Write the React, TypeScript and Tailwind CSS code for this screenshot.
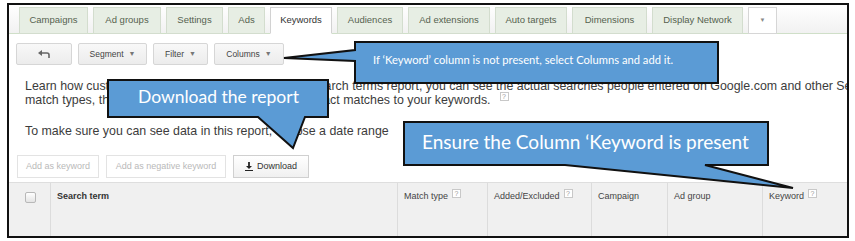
import React from "react";

const tabs = [
  { label: "Campaigns", w: "w-[69px]" },
  { label: "Ad groups", w: "w-[68px]" },
  { label: "Settings", w: "w-[57px]" },
  { label: "Ads", w: "w-[37px]" },
  { label: "Keywords", w: "w-[62px]", active: true },
  { label: "Audiences", w: "w-[66px]" },
  { label: "Ad extensions", w: "w-[82px]" },
  { label: "Auto targets", w: "w-[72px]" },
  { label: "Dimensions", w: "w-[75px]" },
  { label: "Display Network", w: "w-[91px]" },
];

function Help({ gap = "ml-[4px]" }: { gap?: string }) {
  return (
    <span
      className={`inline-flex items-center justify-center w-[9px] h-[9px] border border-[#c8c8c8] bg-white text-[7px] leading-none text-[#9a9a9a] align-top mt-[-1px] ${gap}`}
    >
      ?
    </span>
  );
}

function Caret() {
  return <span className="ml-[5px] text-[7px] text-[#777]">▼</span>;
}

function ToolButton({ w, children }: { w: string; children: React.ReactNode }) {
  return (
    <div
      className={`${w} h-[22px] flex items-center justify-center border border-[#d6d6d6] rounded-[2px] bg-gradient-to-b from-[#f8f8f8] to-[#ececec] text-[8.5px] text-[#444]`}
    >
      {children}
    </div>
  );
}

function TabBar() {
  return (
    <div className="h-[29px] flex items-end gap-[5px] pl-[10px] bg-gradient-to-b from-white to-[#f1f1f1] border-b border-[#cfdfc8]">
      {tabs.map((t) => (
        <div
          key={t.label}
          className={`${t.w} h-[27px] mb-[-1px] flex items-center justify-center text-[9.5px] border ${
            t.active
              ? "bg-white border-[#d2d2d2] border-b-white text-[#333]"
              : "bg-[#e7eee4] border-[#d3ddce] text-[#56624f]"
          }`}
        >
          {t.label}
        </div>
      ))}
      <div className="w-[29px] h-[27px] mb-[-1px] flex items-center justify-center bg-white border border-[#d6d6d6] text-[6px] text-[#888]">
        ▼
      </div>
    </div>
  );
}

function Toolbar() {
  return (
    <div className="flex gap-[6px] pl-[7px] mt-[9px]">
      <ToolButton w="w-[56px]">
        <svg width="12" height="8" viewBox="0 0 12 8">
          <path d="M4 0 L0 3 L4 6 Z" fill="#666" />
          <path d="M3 3 H9 Q11 3 11 5 V8" stroke="#666" strokeWidth="1.6" fill="none" />
        </svg>
      </ToolButton>
      <ToolButton w="w-[69px]">
        Segment
        <Caret />
      </ToolButton>
      <ToolButton w="w-[55px]">
        Filter
        <Caret />
      </ToolButton>
      <ToolButton w="w-[70px]">
        Columns
        <Caret />
      </ToolButton>
    </div>
  );
}

function Intro() {
  return (
    <div className="pl-[16px] mt-[14px] text-[12.4px] leading-[14px] text-[#3c3c3c] whitespace-nowrap overflow-hidden">
      <p>
        Learn how customers are finding your ads. With the search terms report, you can see the actual searches
        people entered on Google.com and other Search Network sites
      </p>
      <p>
        match types, this list might include terms other than exact matches to your keywords.
        <Help gap="ml-[9px]" />
      </p>
      <p className="mt-[17px]">To make sure you can see data in this report, choose a date range</p>
    </div>
  );
}

function ActionRow() {
  return (
    <div className="flex gap-[7px] pl-[8px] mt-[17px]">
      <div className="w-[82px] h-[23px] flex items-center justify-center border border-[#e3e3e3] bg-white text-[9px] text-[#b9b9b9]">
        Add as keyword
      </div>
      <div className="w-[120px] h-[23px] flex items-center justify-center border border-[#e3e3e3] bg-white text-[9px] text-[#b9b9b9]">
        Add as negative keyword
      </div>
      <div className="w-[76px] h-[23px] flex items-center justify-center gap-[4px] border border-[#d0d0d0] bg-gradient-to-b from-white to-[#f0f0f0] text-[9px] text-[#333]">
        <svg width="8" height="9" viewBox="0 0 8 9">
          <path d="M4 0 V5" stroke="#222" strokeWidth="1.8" />
          <path d="M1 4 L4 7 L7 4 Z" fill="#222" />
          <path d="M0 8.5 H8" stroke="#222" strokeWidth="1" />
        </svg>
        Download
      </div>
    </div>
  );
}

const cols = [
  { label: "Match type", w: "w-[90px]", help: true },
  { label: "Added/Excluded", w: "w-[104px]", help: true },
  { label: "Campaign", w: "w-[76px]" },
  { label: "Ad group", w: "w-[95px]" },
  { label: "Keyword", w: "flex-1", help: true },
];

function TableHeader() {
  return (
    <div className="mt-[4px] flex-1 flex bg-[#f0f0f0] border-t border-[#dedede] text-[9px] text-[#444]">
      <div className="w-[42px] border-r border-[#dcdcdc] flex justify-center pt-[9px]">
        <div className="w-[11px] h-[11px] ml-[2px] rounded-[2px] border border-[#b8b8b8] bg-gradient-to-b from-white to-[#e4e4e4]" />
      </div>
      <div className="w-[347px] border-r border-[#dcdcdc] pl-[6px] pt-[7px] font-bold text-[#333]">
        Search term
      </div>
      {cols.map((c) => (
        <div
          key={c.label}
          className={`${c.w} border-r border-[#dcdcdc] last:border-r-0 pl-[6px] pt-[7px]`}
        >
          {c.label}
          {c.help && <Help />}
        </div>
      ))}
    </div>
  );
}

function Callouts() {
  const box = "fill-[#5b9bd5] stroke-[#111]";
  return (
    <>
      <svg className="absolute inset-0 pointer-events-none" width="855" height="241">
        <path className={box} strokeWidth="2" d="M355 42 H718 V83 H355 V61 L284 58 L355 50 Z" />
        <path className={box} strokeWidth="2" d="M108 80 H328 V117 H305 L293 148 L258 117 H108 Z" />
        <path className={box} strokeWidth="2" d="M404 122 H768 V165 H705 L793 188 L565 165 H404 Z" />
      </svg>
      <div className="absolute left-[373px] top-[52px] text-[11.2px] text-white font-['Lato',sans-serif] whitespace-nowrap">
        If ‘Keyword’ column is not present, select Columns and add it.
      </div>
      <div className="absolute left-[138px] top-[86px] text-[17.5px] leading-[22px] text-white font-['Lato',sans-serif] whitespace-nowrap">
        Download the report
      </div>
      <div className="absolute left-[422px] top-[131px] text-[19px] leading-[22px] text-white font-['Lato',sans-serif] whitespace-nowrap">
        Ensure the Column ‘Keyword is present
      </div>
    </>
  );
}

export default function App() {
  return (
    <div className="relative w-[855px] h-[241px] bg-white overflow-hidden font-['Liberation_Sans',Arial,sans-serif]">
      <div className="ml-[7px] mt-[3px] w-[842px] h-[235px] border-2 border-[#111] flex flex-col overflow-hidden">
        <TabBar />
        <Toolbar />
        <Intro />
        <ActionRow />
        <TableHeader />
      </div>
      <Callouts />
    </div>
  );
}
